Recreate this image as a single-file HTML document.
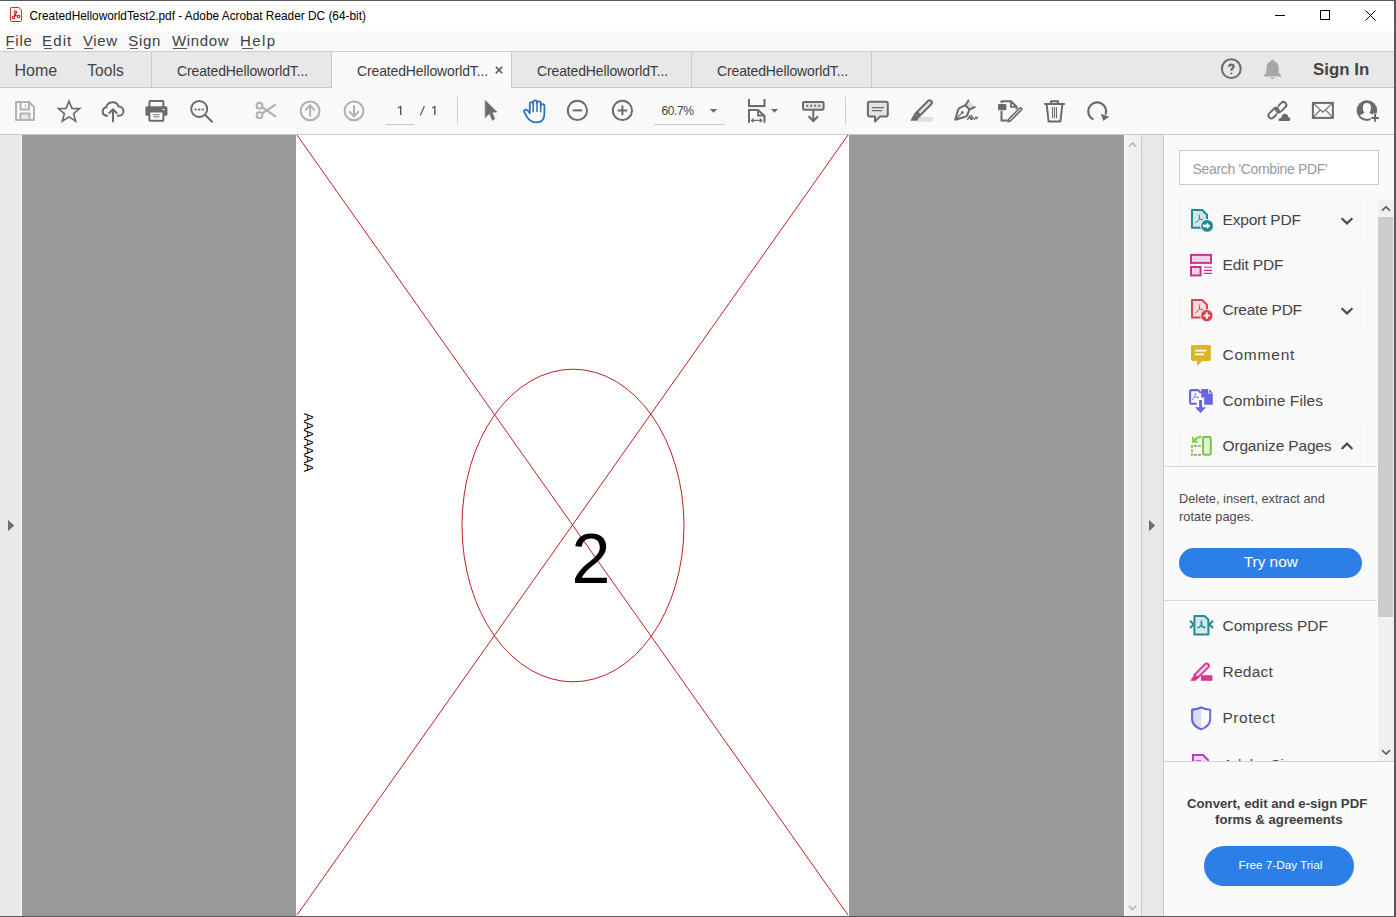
<!DOCTYPE html>
<html><head><meta charset="utf-8">
<style>
*{margin:0;padding:0;box-sizing:border-box}
html,body{width:1396px;height:917px;overflow:hidden;background:#fff;font-family:"Liberation Sans",sans-serif;color:#2c2c2c}
.a{position:absolute}
.t{position:absolute;white-space:nowrap;line-height:1}
svg{position:absolute;overflow:visible}
</style></head><body>
<div id="root" class="a" style="left:0;top:0;width:1396px;height:917px">

<!-- window border -->
<div class="a" style="left:0;top:0;width:1396px;height:1px;background:#5a5a5a"></div>

<!-- title bar -->
<div class="a" style="left:0;top:1px;width:1394px;height:30px;background:#fff"></div>
<svg style="left:9px;top:6px" width="14" height="17" viewBox="0 0 14 17">
  <path d="M2.4 1.5 H9.8 L12.5 4.2 V14.6 Q12.5 15.5 11.6 15.5 H2.4 Q1.5 15.5 1.5 14.6 V2.4 Q1.5 1.5 2.4 1.5 Z" fill="#fdf1f1" stroke="#b13b3b" stroke-width="1"/>
  <path d="M6.5 6.3 L6.5 9.5 L4.4 11.4 M6.5 9.5 L9.6 10.5" stroke="#cc2222" stroke-width="1.3"/>
  <circle cx="6.5" cy="6.3" r="1.2" fill="#fdf1f1" stroke="#cc2222" stroke-width="1.1"/>
  <circle cx="4.4" cy="11.4" r="1.2" fill="#fdf1f1" stroke="#cc2222" stroke-width="1.1"/>
  <circle cx="9.6" cy="10.5" r="1.2" fill="#fdf1f1" stroke="#cc2222" stroke-width="1.1"/>
</svg>
<div class="t" style="left:29.5px;top:10.5px;font-size:11.85px;color:#000">CreatedHelloworldTest2.pdf - Adobe Acrobat Reader DC (64-bit)</div>
<!-- window controls -->
<div class="a" style="left:1275px;top:15px;width:10px;height:1px;background:#000"></div>
<div class="a" style="left:1320px;top:10px;width:10px;height:10px;border:1px solid #000"></div>
<svg style="left:1365px;top:9.5px" width="11" height="11" viewBox="0 0 11 11"><path d="M0.5 0.5 L10.5 10.5 M10.5 0.5 L0.5 10.5" stroke="#000" stroke-width="1"/></svg>

<!-- menu bar -->
<div class="a" style="left:0;top:31px;width:1394px;height:20px;background:#f9f9f9"></div>
<div id="menu">
<div class="t" style="left:5.5px;top:33px;font-size:15px;letter-spacing:0.7px;color:#404040">File</div>
<div class="t" style="left:42.1px;top:33px;font-size:15px;letter-spacing:1.1px;color:#404040">Edit</div>
<div class="t" style="left:83px;top:33px;font-size:15px;letter-spacing:0.6px;color:#404040">View</div>
<div class="t" style="left:128.2px;top:33px;font-size:15px;letter-spacing:0.75px;color:#404040">Sign</div>
<div class="t" style="left:172.1px;top:33px;font-size:15px;letter-spacing:0.62px;color:#404040">Window</div>
<div class="t" style="left:240.1px;top:33px;font-size:15px;letter-spacing:1.35px;color:#404040">Help</div>
<div class="a" style="left:7px;top:48px;width:7px;height:1px;background:#555"></div>
<div class="a" style="left:44px;top:48px;width:8px;height:1px;background:#555"></div>
<div class="a" style="left:84px;top:48px;width:9px;height:1px;background:#555"></div>
<div class="a" style="left:130px;top:48px;width:8px;height:1px;background:#555"></div>
<div class="a" style="left:173px;top:48px;width:14px;height:1px;background:#555"></div>
<div class="a" style="left:242px;top:48px;width:11px;height:1px;background:#555"></div>
</div>

<!-- tab bar -->
<div class="a" style="left:0;top:51px;width:1394px;height:37px;background:#e8e8e8;border-top:1px solid #cfcfcf;border-bottom:1px solid #c8c8c8"></div>
<div class="t" style="left:14.5px;top:63.3px;font-size:16px;color:#444">Home</div>
<div class="t" style="left:87.3px;top:63px;font-size:15.6px;color:#444">Tools</div>
<div class="a" style="left:151px;top:52px;width:1px;height:35px;background:#cacaca"></div>
<div class="t" style="left:177px;top:63.8px;font-size:14px;letter-spacing:-0.14px;color:#3c3c3c">CreatedHelloworldT...</div>
<div class="a" style="left:331px;top:52px;width:181px;height:36px;background:#f9f9f9;border-left:1px solid #cacaca;border-right:1px solid #cacaca"></div>
<div class="t" style="left:357px;top:63.8px;font-size:14px;letter-spacing:-0.14px;color:#3c3c3c">CreatedHelloworldT...</div>
<svg style="left:495px;top:66px" width="8" height="8" viewBox="0 0 8 8"><path d="M0.8 0.8 L7.2 7.2 M7.2 0.8 L0.8 7.2" stroke="#555" stroke-width="1.6"/></svg>
<div class="t" style="left:537px;top:63.8px;font-size:14px;letter-spacing:-0.14px;color:#3c3c3c">CreatedHelloworldT...</div>
<div class="a" style="left:691px;top:52px;width:1px;height:35px;background:#cacaca"></div>
<div class="t" style="left:717px;top:63.8px;font-size:14px;letter-spacing:-0.14px;color:#3c3c3c">CreatedHelloworldT...</div>
<div class="a" style="left:871px;top:52px;width:1px;height:35px;background:#cacaca"></div>

<!-- toolbar -->
<div class="a" style="left:0;top:88px;width:1394px;height:47px;background:#f9f9f9;border-bottom:1px solid #c8c8c8"></div>


<!-- toolbar icons -->
<svg style="left:15px;top:101px" width="20" height="20" viewBox="0 0 20 20" fill="none" stroke="#b3b3b3" stroke-width="2" stroke-linejoin="round">
  <path d="M1 1 H14 L19 6 V19 H1 Z"/><rect x="5.5" y="1" width="8.5" height="7.5"/><path d="M10.5 3.5 V6.2" stroke-width="1.3"/><rect x="5.5" y="12.5" width="9" height="6.5" fill="#e6e6e6"/>
</svg>
<svg style="left:57px;top:99.6px" width="24" height="23" viewBox="0 0 24 23">
  <path d="M12 1.2 L14.9 8.4 L22.7 8.6 L16.6 13.6 L18.7 21.2 L12 16.9 L5.3 21.2 L7.4 13.6 L1.3 8.6 L9.1 8.4 Z" fill="none" stroke="#6b6b6b" stroke-width="1.6" stroke-linejoin="miter"/>
</svg>
<svg style="left:101px;top:100px" width="24" height="23" viewBox="0 0 24 23" fill="none" stroke="#6b6b6b" stroke-width="2" stroke-linecap="round">
  <path d="M6.2 15.8 H5.5 A4.3 4.3 0 0 1 5.3 7.3 A6.4 6.4 0 0 1 17.6 6.4 A4.7 4.7 0 0 1 18 15.8 H17"/>
  <path d="M12 21.6 V9.5 M8.3 13 L12 9.3 L15.7 13"/>
</svg>
<svg style="left:144.5px;top:100px" width="23" height="22" viewBox="0 0 23 22">
  <rect x="4.4" y="1" width="14" height="7" rx="0.8" fill="none" stroke="#6b6b6b" stroke-width="2"/>
  <rect x="0.4" y="6.2" width="22" height="9.6" rx="1.6" fill="#6b6b6b"/>
  <rect x="4.4" y="11.4" width="14" height="9.3" rx="0.8" fill="#fff" stroke="#6b6b6b" stroke-width="2"/>
  <path d="M8.3 14.7 H14.6 M8.3 16.9 H14.6" stroke="#6b6b6b" stroke-width="1"/>
  <rect x="17.3" y="9" width="2.2" height="1" fill="#fff"/>
</svg>
<svg style="left:189px;top:99px" width="25" height="25" viewBox="0 0 25 25" fill="none" stroke="#6b6b6b" stroke-width="2" stroke-linecap="round">
  <circle cx="10.2" cy="10" r="8"/><path d="M16.2 16 L23 22.8"/>
  <path d="M6.4 10.6 h0.5 M10 10.6 h0.5 M13.6 10.6 h0.5" stroke-width="2"/>
</svg>
<svg style="left:255px;top:101px" width="22" height="19" viewBox="0 0 22 19" fill="none" stroke="#b0b0b0" stroke-width="2">
  <circle cx="4.5" cy="4.7" r="2.9"/><circle cx="4.5" cy="14.2" r="2.9"/>
  <path d="M7 6.2 L20.8 15.6 M7 12.7 L20.8 3.3" stroke-linecap="butt"/>
</svg>
<svg style="left:299px;top:100px" width="23" height="23" viewBox="0 0 23 23" fill="none" stroke="#b0b0b0" stroke-width="2">
  <circle cx="11.1" cy="10.9" r="9.4"/><path d="M11.1 16.6 V5.5 M6.2 10.4 L11.1 5.5 L16 10.4"/>
</svg>
<svg style="left:343px;top:100px" width="23" height="23" viewBox="0 0 23 23" fill="none" stroke="#b0b0b0" stroke-width="2">
  <circle cx="11" cy="10.9" r="9.4"/><path d="M11 5.2 V16.3 M6.1 11.4 L11 16.3 L15.9 11.4"/>
</svg>
<svg style="left:380px;top:98px" width="70" height="30" viewBox="0 0 70 30" fill="none" stroke="#4a4a4a" stroke-width="1.3">
  <path d="M20.7 8 V17"/><path d="M17.9 10 Q19.8 9.2 20.8 8" stroke-width="1.1"/>
  <path d="M40.3 17.4 L44.4 8" stroke-width="1.1"/>
  <path d="M54.8 8 V17"/><path d="M52 10 Q53.9 9.2 54.9 8" stroke-width="1.1"/>
</svg>
<div class="a" style="left:386px;top:124px;width:28px;height:1px;background:#c8c8c8"></div>

<div class="a" style="left:457px;top:97px;width:1px;height:28px;background:#cfcfcf"></div>
<svg style="left:484px;top:99px" width="15" height="23" viewBox="0 0 15 23">
  <path d="M1.2 1.4 L13 13 L8.1 13.3 L10.8 19.7 L8.6 21.6 L5.4 14.5 L1.2 18.6 Z" fill="#6e6e6e" stroke="#6e6e6e" stroke-width="0.6" stroke-linejoin="round"/>
</svg>
<svg style="left:523px;top:99px" width="23" height="25" viewBox="0 0 23 25" fill="none" stroke="#2e70bf" stroke-width="1.8" stroke-linejoin="round" stroke-linecap="round">
  <path d="M4 18 L1.3 13.3 Q0.6 11.4 2.4 10.8 Q4.2 10.3 5.8 12.9 L6.8 14.2 V5 Q6.8 3.2 8.5 3.2 Q10.2 3.2 10.2 5 V3.2 Q10.2 1.3 12.1 1.3 Q14 1.3 14 3.2 V4 Q14 2.3 15.9 2.3 Q17.7 2.3 17.7 4 V6.8 Q17.7 5.2 19.6 5.2 Q21.4 5.2 21.4 6.8 V14.5 Q21.4 23.4 13.4 23.4 Q7.6 23.4 4 18 Z"/>
  <path d="M10.2 5 V12.8 M14 4 V12.5 M17.7 6.8 V12.8" stroke-width="1.5"/>
</svg>
<svg style="left:566px;top:99px" width="23" height="23" viewBox="0 0 23 23" fill="none" stroke="#6b6b6b" stroke-width="2">
  <circle cx="11.4" cy="11.4" r="9.6"/><path d="M6.6 11.4 H16.2"/>
</svg>
<svg style="left:610.5px;top:99px" width="23" height="23" viewBox="0 0 23 23" fill="none" stroke="#6b6b6b" stroke-width="2">
  <circle cx="11.4" cy="11.4" r="9.6"/><path d="M6.6 11.4 H16.2 M11.4 6.6 V16.2"/>
</svg>
<div class="t" style="left:661.6px;top:105.3px;font-size:12px;letter-spacing:-0.42px;color:#444">60.7%</div>
<svg style="left:709px;top:108px" width="9" height="6" viewBox="0 0 9 6"><path d="M0.8 1 H8.2 L4.5 4.8 Z" fill="#6b6b6b"/></svg>
<div class="a" style="left:654px;top:124px;width:71px;height:1px;background:#c8c8c8"></div>
<svg style="left:747px;top:98px" width="20" height="26" viewBox="0 0 20 26" fill="none" stroke="#6b6b6b" stroke-width="2">
  <path d="M2 1 V8 H17.5 V1"/>
  <path d="M2 24.7 V12 H11 L17.5 18 V24.7"/><path d="M11 12 V17.5 H17.5" stroke-width="1.8"/>
  <path d="M4.5 22.4 H14.8 M6.6 20.4 L4.5 22.4 L6.6 24.4 M12.7 20.4 L14.8 22.4 L12.7 24.4" stroke-width="1.3"/>
  <path d="M2 9.6 H17.5" stroke="#e4e4e4" stroke-width="1"/>
</svg>
<svg style="left:770px;top:108px" width="9" height="6" viewBox="0 0 9 6"><path d="M1 1 H8 L4.5 4.8 Z" fill="#6b6b6b"/></svg>
<svg style="left:801px;top:100px" width="24" height="23" viewBox="0 0 24 23" fill="none" stroke="#6b6b6b" stroke-width="2">
  <rect x="2" y="1.9" width="20.6" height="7.8" rx="1.2" fill="#e4e4e4"/>
  <path d="M5.3 5.8 h1.9 M9.3 5.8 h1.9 M13.3 5.8 h1.9 M17.3 5.8 h1.9" stroke-width="2"/>
  <path d="M12.3 10.5 V21 M7.5 16.2 L12.3 21 L17.1 16.2"/>
</svg>
<div class="a" style="left:845px;top:97px;width:1px;height:28px;background:#cfcfcf"></div>
<svg style="left:867px;top:100px" width="23" height="23" viewBox="0 0 23 23">
  <path d="M2.5 1.8 H19 Q20.8 1.8 20.8 3.6 V14.6 Q20.8 16.4 19 16.4 H13.2 L8 21.6 V16.4 H2.5 Q0.9 16.4 0.9 14.6 V3.6 Q0.9 1.8 2.5 1.8 Z" fill="#e3e3e3" stroke="#6b6b6b" stroke-width="2" stroke-linejoin="round"/>
  <path d="M5 7.6 H17 M5 10.6 H15" stroke="#6b6b6b" stroke-width="1.1"/>
</svg>
<svg style="left:905px;top:96px" width="76" height="29" viewBox="0 0 76 29">
  <rect x="11.7" y="21" width="16.3" height="4.6" fill="#dedede"/>
  <path d="M12 16 L23 5 Q24.6 3.4 26.2 5 Q27.8 6.6 26.2 8.2 L15.2 19.2 Z" fill="#e3e3e3" stroke="#6b6b6b" stroke-width="2" stroke-linejoin="round"/>
  <path d="M11.3 15.3 L15.9 19.9 L13.8 22 L9.2 17.4 Z" fill="#6b6b6b"/>
  <path d="M9.2 17.4 L13.8 22 L12 24.8 L5.4 24.8 Z" fill="#6b6b6b"/>
  <path d="M60.4 9 L63.4 4.4 L70 11.2 L64.6 14 Z" fill="#dcdcdc"/>
  <path d="M60.4 9.2 L63.4 4.6 M64.4 13.6 L69.6 11" fill="none" stroke="#6b6b6b" stroke-width="2" stroke-linecap="round"/>
  <path d="M50.2 23.8 L53.2 13.6 Q53.6 12.4 54.8 11.8 L60.4 9.2 L64.4 13.6 L62.2 19.2 Q61.6 20.4 60.4 20.8 Z" fill="none" stroke="#6b6b6b" stroke-width="2" stroke-linejoin="round"/>
  <path d="M51 23 L57.2 16.6" stroke="#6b6b6b" stroke-width="1.1"/>
  <circle cx="57.4" cy="16.4" r="1.3" fill="#6b6b6b"/>
  <path d="M62.6 23.6 L64.8 19.8 L65.8 23.4 M66.8 19.4 V23.4 Q68.8 20.6 69.6 23.4 M70.6 21.2 Q71.2 24.2 72.4 21" fill="none" stroke="#6b6b6b" stroke-width="1.4" stroke-linecap="round" stroke-linejoin="round"/>
</svg>
<svg style="left:997px;top:99px" width="26" height="25" viewBox="0 0 26 25" fill="none" stroke="#6b6b6b" stroke-width="2" stroke-linejoin="round">
  <path d="M4.5 4 V2.2 H14 L19.6 7.8 V10.2"/><path d="M14 2.2 V7.8 H19.6" stroke-width="1.8"/>
  <path d="M4.5 12 V21.6 H10.6"/>
  <rect x="1" y="5" width="8.4" height="6.2" rx="1" fill="#6b6b6b" stroke="none"/>
  <path d="M11.6 20.2 L22.4 9.4 Q23.5 8.3 24.4 9.2 Q25.3 10.1 24.2 11.2 L13.4 22 L11 22.6 Z" fill="#e6e6e6" stroke-width="1.6"/>
</svg>
<svg style="left:1043px;top:99px" width="23" height="24" viewBox="0 0 23 24" fill="none" stroke="#6b6b6b" stroke-width="2" stroke-linejoin="round">
  <path d="M1.2 5 H21.8"/><path d="M8 5 V2.2 H15 V5"/>
  <path d="M3.6 5 L5.6 22.4 H17.4 L19.4 5"/>
  <path d="M9.5 8 V19.2 M11.5 8 V19.2 M13.5 8 V19.2" stroke-width="1.1"/>
</svg>
<svg style="left:1086px;top:100px" width="24" height="22" viewBox="0 0 24 22" fill="none" stroke="#6b6b6b" stroke-width="2.2" stroke-linecap="butt">
  <path d="M7.4 19.6 A9 9 0 1 1 19.6 14.6"/>
  <path d="M14.8 13.8 L23.2 16.8 L17.4 21 Z" fill="#6b6b6b" stroke="none"/>
</svg>
<svg style="left:1263px;top:96px" width="32" height="30" viewBox="0 0 32 30" fill="none" stroke="#6b6b6b" stroke-width="2">
  <rect x="-6" y="-2.9" width="12" height="5.8" rx="2.9" transform="translate(18.2 11.1) rotate(-45)"/>
  <rect x="-6" y="-2.9" width="12" height="5.8" rx="2.9" transform="translate(10.6 17.2) rotate(-45)"/>
  <path d="M12.6 8.6 L14.6 10.6" stroke="#f9f9f9" stroke-width="1.8"/>
  <path d="M14.2 17.8 L16.2 19.8" stroke="#f9f9f9" stroke-width="1.8"/>
  <path d="M16.4 25.7 Q14.9 25.7 14.9 24 Q14.9 21.6 17.6 21.4 Q18.4 17 22 17 Q25.2 17 25.8 20.6 Q28 20.9 28 23.3 Q28 25.7 26 25.7 Z" fill="#6b6b6b" stroke="#f9f9f9" stroke-width="1.3"/>
</svg>
<svg style="left:1311px;top:101px" width="24" height="19" viewBox="0 0 24 19" fill="none" stroke="#6b6b6b">
  <rect x="1.9" y="1.9" width="20" height="15" stroke-width="2"/>
  <path d="M2.4 2.4 L11.9 11.2 L21.4 2.4 M2.4 16.4 L9.2 8.8 M21.4 16.4 L14.6 8.8" stroke-width="1.1"/>
</svg>
<svg style="left:1352px;top:96px" width="32" height="30" viewBox="0 0 32 30">
  <defs><clipPath id="uc"><circle cx="14.9" cy="14.6" r="8.4"/></clipPath></defs>
  <circle cx="14.9" cy="14.6" r="10.3" fill="#6b6b6b"/>
  <path clip-path="url(#uc)" d="M10.8 11.5 Q10.8 6.9 14.9 6.9 Q19 6.9 19 11.5 Q19 15 17.4 16.6 Q17.6 17.6 20.6 18.6 Q24 19.8 24 24 H5.8 Q5.8 19.8 9.2 18.6 Q12.2 17.6 12.4 16.6 Q10.8 15 10.8 11.5 Z" fill="#f9f9f9"/>
  <path d="M18.6 21.9 H27.6 M23.1 17.4 V26.4" stroke="#f9f9f9" stroke-width="4.6"/>
  <path d="M19.3 21.9 H26.9 M23.1 18.1 V25.7" stroke="#6b6b6b" stroke-width="2"/>
</svg>
<!-- tab bar right icons -->
<svg style="left:1220px;top:58px" width="23" height="22" viewBox="0 0 23 22" fill="none" stroke="#6b6b6b" stroke-width="2">
  <circle cx="11.3" cy="10.7" r="9.4"/>
  <path d="M9.2 8.7 Q9.2 6.6 11.4 6.6 Q13.5 6.6 13.5 8.5 Q13.5 9.8 12.2 10.6 Q11.3 11.2 11.3 12.8" stroke-width="2.3"/>
  <path d="M10.1 15.4 L11.3 14.2 L12.5 15.4 L11.3 16.6 Z" fill="#6b6b6b" stroke="none"/>
</svg>
<svg style="left:1263px;top:59px" width="20" height="21" viewBox="0 0 20 21">
  <path d="M9.5 0.8 Q11 0.8 11 2.2 Q15.6 3.4 15.6 9 V13.6 L18.2 16.6 Q18.4 17.4 17.6 17.4 H1.4 Q0.6 17.4 0.8 16.6 L3.4 13.6 V9 Q3.4 3.4 8 2.2 Q8 0.8 9.5 0.8 Z" fill="#a6a6a6"/>
  <path d="M7.2 18.4 H11.8 Q11 20 9.5 20 Q8 20 7.2 18.4 Z" fill="#a6a6a6"/>
</svg>
<div class="t" style="left:1313px;top:62.3px;font-size:16.9px;font-weight:700;color:#444">Sign In</div>

<!-- content -->
<div class="a" style="left:0;top:135px;width:22px;height:781px;background:#e9e9e9;border-right:1px solid #f6f6f6"></div>
<div class="a" style="left:22px;top:135px;width:1102px;height:781px;background:#999"></div>
<div class="a" style="left:1124px;top:135px;width:18px;height:781px;background:#f0f0f0;border-left:1px solid #fdfdfd;border-right:1px solid #c8c8c8"></div>
<div class="a" style="left:1142px;top:135px;width:22px;height:781px;background:#e8e8e8;border-right:1px solid #c8c8c8"></div>
<div class="a" style="left:1164px;top:135px;width:230px;height:781px;background:#fafafa"></div>

<!-- page -->
<div class="a" style="left:296px;top:135px;width:553px;height:781px;background:#fff"></div>



<!-- right panel -->
<div class="a" style="left:1179px;top:150px;width:200px;height:35px;background:#fff;border:1px solid #c9c9c9"></div>
<div class="t" style="left:1192.5px;top:162px;font-size:14px;letter-spacing:-0.33px;color:#9a9a9a">Search 'Combine PDF'</div>
<!-- list scrollbar -->
<div class="a" style="left:1378px;top:200px;width:16px;height:561px;background:#f0f0f0"></div>
<div class="a" style="left:1378px;top:217px;width:15px;height:400px;background:#cdcdcd"></div>
<svg style="left:1381px;top:205px" width="10" height="7" viewBox="0 0 10 7"><path d="M1 5.6 L5 1.8 L9 5.6" fill="none" stroke="#606060" stroke-width="1.7"/></svg>
<svg style="left:1381px;top:749px" width="10" height="7" viewBox="0 0 10 7"><path d="M1 1.2 L5 5 L9 1.2" fill="none" stroke="#606060" stroke-width="1.7"/></svg>
<!-- row highlights -->
<div class="a" style="left:1179px;top:200px;width:183px;height:40px;background:#f8f8f8"></div>
<div class="a" style="left:1179px;top:290px;width:183px;height:40px;background:#f8f8f8"></div>
<div class="a" style="left:1179px;top:426px;width:183px;height:40px;background:#f8f8f8"></div>

<div class="t" style="left:1222.5px;top:212.35px;font-size:15.5px;letter-spacing:-0.18px;color:#444">Export PDF</div>
<div class="t" style="left:1222.5px;top:257.35px;font-size:15.5px;letter-spacing:-0.16px;color:#444">Edit PDF</div>
<div class="t" style="left:1222.5px;top:302.35px;font-size:15.5px;letter-spacing:-0.25px;color:#444">Create PDF</div>
<div class="t" style="left:1222.5px;top:347.35px;font-size:15.5px;letter-spacing:0.78px;color:#444">Comment</div>
<div class="t" style="left:1222.5px;top:393.35px;font-size:15.5px;letter-spacing:0.12px;color:#444">Combine Files</div>
<div class="t" style="left:1222.5px;top:438.35px;font-size:15.5px;letter-spacing:-0.16px;color:#444">Organize Pages</div>
<svg style="left:1340px;top:215.5px" width="14" height="10" viewBox="0 0 14 10"><path d="M1.6 2.2 L7 7.4 L12.4 2.2" fill="none" stroke="#4b4b4b" stroke-width="2.2"/></svg>
<svg style="left:1340px;top:305.5px" width="14" height="10" viewBox="0 0 14 10"><path d="M1.6 2.2 L7 7.4 L12.4 2.2" fill="none" stroke="#4b4b4b" stroke-width="2.2"/></svg>
<svg style="left:1340px;top:441px" width="14" height="10" viewBox="0 0 14 10"><path d="M1.6 8 L7 2.6 L12.4 8" fill="none" stroke="#4b4b4b" stroke-width="2.2"/></svg>

<!-- panel icons -->
<svg style="left:1190px;top:208px" width="24" height="25" viewBox="0 0 24 25">
  <path d="M2 2 H12.2 L17 6.8 V19.8 H2 Z" fill="#cfe7e8" stroke="#1f8c92" stroke-width="2" stroke-linejoin="round"/>
  <path d="M9.1 6.5 Q9.6 9 9.5 11 Q8 13.6 5.3 14.7 M9.5 11 Q11 11.6 13 11.6" fill="none" stroke="#1f8c92" stroke-width="1"/>
  <circle cx="17.1" cy="17.9" r="6.4" fill="#1f8c92" stroke="#fafafa" stroke-width="1"/>
  <path d="M13 16.6 H16.9 V14.8 L20.4 17.9 L16.9 21 V19.2 H13 Z" fill="#fff"/>
</svg>
<svg style="left:1189px;top:253px" width="24" height="24" viewBox="0 0 24 24" fill="#f2d3e7" stroke="#c8338f" stroke-width="2">
  <rect x="2" y="1.9" width="20" height="8"/>
  <rect x="2" y="14" width="9.6" height="8.4"/>
  <path d="M15 14.3 H23 M15 17.4 H23 M15 20.4 H23" stroke-width="1.1"/>
</svg>
<svg style="left:1190px;top:298px" width="24" height="25" viewBox="0 0 24 25">
  <path d="M2 2 H12.2 L17 6.8 V19.6 H2 Z" fill="#f8dadd" stroke="#cc4a55" stroke-width="2" stroke-linejoin="round"/>
  <path d="M9.1 6.5 Q9.6 9 9.5 11 Q8 13.6 5.3 14.7 M9.5 11 Q11 11.6 13 11.6" fill="none" stroke="#cc4a55" stroke-width="1"/>
  <circle cx="16.8" cy="17.6" r="6.2" fill="#d7434f" stroke="#fafafa" stroke-width="0.8"/>
  <path d="M13.6 17.6 H20 M16.8 14.4 V20.8" fill="none" stroke="#fff" stroke-width="1.9"/>
</svg>
<svg style="left:1190px;top:344px" width="22" height="23" viewBox="0 0 22 23">
  <path d="M2.4 1 H19.4 Q20.8 1 20.8 2.4 V15.6 Q20.8 17 19.4 17 H12.4 L7 22 V17 H2.4 Q1 17 1 15.6 V2.4 Q1 1 2.4 1 Z" fill="#dbb42a"/>
  <path d="M5.2 6.6 H16.4 M5.2 10.4 H14" stroke="#fff" stroke-width="1.8"/>
</svg>
<svg style="left:1186px;top:385px" width="30" height="30" viewBox="0 0 30 30">
  <path d="M10.8 18.8 H5.6 Q4.1 18.8 4.1 17.3 V6.6 Q4.1 5.1 5.6 5.1 H12 L14.8 7.9" fill="none" stroke="#6464dc" stroke-width="2.1"/>
  <path d="M9.5 8.3 Q9.6 12 6.2 14.8 M9.4 11.8 Q10.8 12.6 12.8 12.4" fill="none" stroke="#6a6ae0" stroke-width="1"/>
  <path d="M15.2 4.1 H22.2 V8.4 H26.8 V19.8 H18.2 V12.6 H15.2 Z" fill="#6666e2"/>
  <path d="M23.2 4.1 L26.8 7.7 H23.2 Z" fill="#6666e2"/>
  <rect x="12.6" y="14.5" width="3.9" height="8.5" fill="#fafafa"/><rect x="13.1" y="15" width="2.9" height="8" fill="#6666e2"/><path d="M9 22.2 H20.1 L14.55 27.9 Z" fill="#6666e2"/>
</svg>
<svg style="left:1186px;top:430px" width="30" height="30" viewBox="0 0 30 30">
  <rect x="17" y="7" width="7.8" height="17.7" rx="1.4" fill="#e4f0d8" stroke="#79c447" stroke-width="2"/>
  <g fill="#80b552"><rect x="5.1" y="15" width="1.8" height="2.7"/><rect x="5.1" y="19.3" width="1.8" height="2.5"/><rect x="5.1" y="23.2" width="1.8" height="2.6"/><rect x="8" y="15" width="2.8" height="1.8"/><rect x="12.1" y="15" width="2.8" height="1.8"/><rect x="8" y="24" width="2.8" height="1.8"/><rect x="12.1" y="24" width="2.8" height="1.8"/></g>
  <path d="M6 6.2 L6 12.8 L12.6 12.8 Z" fill="#7fd24a"/>
  <path d="M8.6 10.2 Q11 7.2 14.6 6.6" fill="none" stroke="#7fd24a" stroke-width="2.3" stroke-linecap="round"/>
</svg>

<div class="a" style="left:1164px;top:466px;width:213px;height:1px;background:#d8d8d8"></div>
<div class="t" style="left:1179px;top:490px;font-size:12.8px;color:#4a4a4a;line-height:17.6px">Delete, insert, extract and<br>rotate pages.</div>
<div class="a" style="left:1179px;top:548px;width:183px;height:30px;border-radius:15px;background:#2c7fe6"></div>
<div class="t" style="left:1243.7px;top:554.3px;font-size:15.4px;color:#fff">Try now</div>
<div class="a" style="left:1164px;top:600px;width:213px;height:1px;background:#d8d8d8"></div>

<div class="t" style="left:1222.5px;top:617.95px;font-size:15.5px;letter-spacing:-0.04px;color:#444">Compress PDF</div>
<div class="t" style="left:1222.5px;top:664.15px;font-size:15.5px;letter-spacing:0.26px;color:#444">Redact</div>
<div class="t" style="left:1222.5px;top:710.25px;font-size:15.5px;letter-spacing:0.53px;color:#444">Protect</div>
<div class="a" style="left:1164px;top:740px;width:213px;height:21px;overflow:hidden">
  <div class="t" style="left:59px;top:16.5px;font-size:15px;color:#444">Adobe Sign</div>
  <svg style="left:27px;top:13px" width="22" height="22" viewBox="0 0 22 22"><path d="M2 2 H12 L17 7 V20 H2 Z" fill="#f0d6f4" stroke="#b83dc4" stroke-width="2"/><path d="M5 8 H10" stroke="#b83dc4" stroke-width="1.5"/></svg>
</div>
<svg style="left:1189px;top:614px" width="25" height="23" viewBox="0 0 25 23">
  <path d="M5.4 2 H15.6 L19.4 5.8 V20.6 H5.4 Z" fill="#d3eaeb" stroke="#1f8c92" stroke-width="2" stroke-linejoin="round"/>
  <path d="M1 6.8 L4.6 10.4 L1 14 M24 6.8 L20.4 10.4 L24 14" fill="none" stroke="#1f8c92" stroke-width="2"/>
  <path d="M12.4 6.6 V11.6 L8.6 14.2 M12.4 11.6 L16.2 14" fill="none" stroke="#1f8c92" stroke-width="1.6"/>
</svg>
<svg style="left:1189px;top:661px" width="25" height="21" viewBox="0 0 25 21">
  <path d="M11.6 19.6 H23 V15.2 H16" fill="#d83790"/>
  <rect x="12" y="14.2" width="11.4" height="5.4" fill="#d83790"/>
  <path d="M5.4 13.8 L15.8 3.4 Q17.6 1.6 19.2 3.2 Q20.8 4.8 19 6.6 L8.6 17 Z" fill="#f7d2e6" stroke="#d83790" stroke-width="1.9"/>
  <path d="M5.4 13.8 L8.6 17 L7.2 19.8 H1.2 Z" fill="#d83790"/>
</svg>
<svg style="left:1191px;top:706px" width="21" height="25" viewBox="0 0 21 25">
  <path d="M10.2 1.4 Q13.8 3.6 19.2 3.8 V13 Q19.2 19.8 10.2 23.4 Q1.2 19.8 1.2 13 V3.8 Q6.6 3.6 10.2 1.4 Z" fill="#fafafa" stroke="#6767df" stroke-width="2" stroke-linejoin="round"/>
  <path d="M10.2 2.4 Q6.6 4.4 2.2 4.6 V13 Q2.2 19.2 10.2 22.4 Z" fill="#dcdcf6"/>
  <path d="M10.2 1.4 Q6.6 3.6 1.2 3.8 V13 Q1.2 19.8 10.2 23.4" fill="none" stroke="#6767df" stroke-width="2" stroke-linejoin="round"/>
</svg>

<div class="a" style="left:1164px;top:761px;width:230px;height:1px;background:#d3d3d3"></div>
<div class="t" style="left:1187px;top:797px;font-size:13.2px;font-weight:700;color:#404040">Convert, edit and e-sign PDF</div>
<div class="t" style="left:1215px;top:812.5px;font-size:13.2px;font-weight:700;color:#404040">forms &amp; agreements</div>
<div class="a" style="left:1204px;top:846px;width:150px;height:40px;border-radius:20px;background:#2c7fe6"></div>
<div class="t" style="left:1238.5px;top:859.6px;font-size:11.8px;letter-spacing:-0.05px;color:#fff">Free 7-Day Trial</div>

<!-- page content -->
<svg style="left:0;top:0" width="1396" height="917" viewBox="0 0 1396 917">
  <line x1="297" y1="135" x2="848" y2="915" stroke="#c41f1f" stroke-width="1"/>
  <line x1="848" y1="135" x2="297" y2="915" stroke="#c41f1f" stroke-width="1"/>
  <ellipse cx="573" cy="525.5" rx="111" ry="156.3" fill="none" stroke="#c41f1f" stroke-width="1"/>
</svg>
<div class="t" style="left:571.5px;top:524px;font-size:70px;color:#000">2</div>
<div class="t" style="left:314px;top:412.5px;font-size:12.6px;color:#000;transform-origin:0 0;transform:rotate(90deg)">AAAAAAA</div>
<!-- left panel arrow -->
<svg style="left:8px;top:520px" width="7" height="12" viewBox="0 0 7 12"><path d="M0 0 L6.2 5.6 L0 11.2 Z" fill="#6e6e6e"/></svg>
<!-- doc scrollbar arrows -->
<svg style="left:1128px;top:141px" width="9" height="7" viewBox="0 0 9 7"><path d="M0.8 5.8 L4.5 2 L8.2 5.8" fill="none" stroke="#b5b5b5" stroke-width="1.6"/></svg>
<svg style="left:1128px;top:905px" width="9" height="7" viewBox="0 0 9 7"><path d="M0.8 0.8 L4.5 4.6 L8.2 0.8" fill="none" stroke="#b5b5b5" stroke-width="1.6"/></svg>
<!-- middle strip arrow -->
<svg style="left:1149px;top:520px" width="7" height="12" viewBox="0 0 7 12"><path d="M0 0 L6.2 5.6 L0 11.2 Z" fill="#6e6e6e"/></svg>

<!-- right border & bottom -->
<div class="a" style="left:1394px;top:0;width:2px;height:917px;background:#5a5a5a"></div>
<div class="a" style="left:0;top:916px;width:1396px;height:1px;background:#5a5a5a"></div>

</div>
</body></html>
